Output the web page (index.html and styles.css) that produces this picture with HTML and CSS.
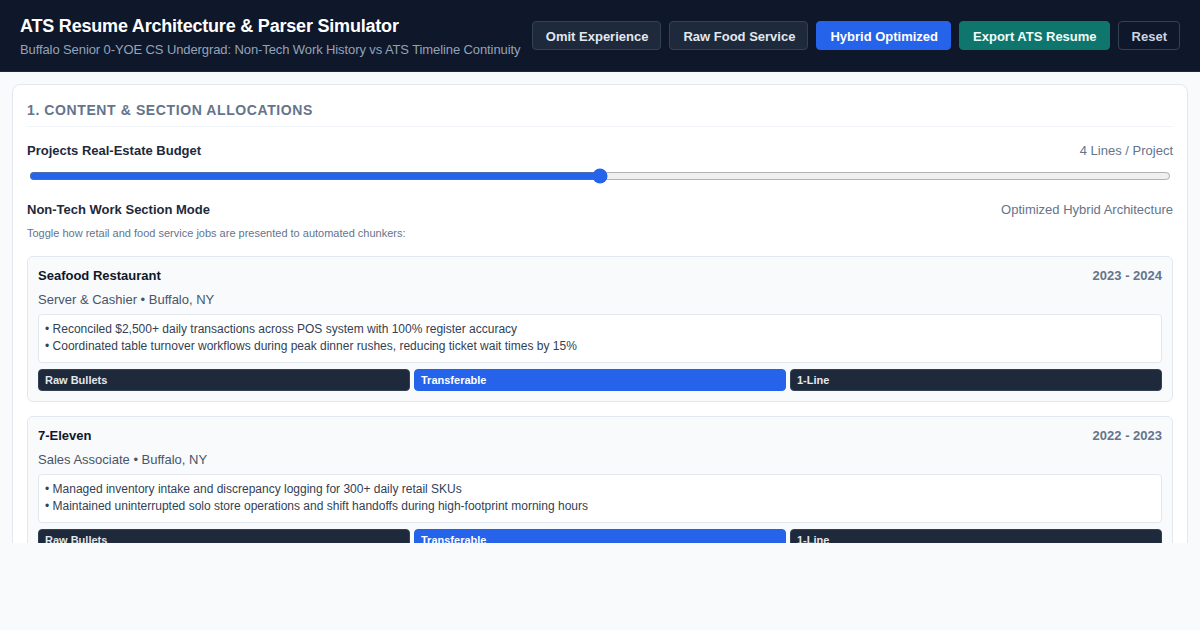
FILE: index.html
```html
<!DOCTYPE html>
<html>
<head>
<meta charset="utf-8">
<link rel="stylesheet" href="styles.css">
</head>
<body>
<header class="topbar">
  <div class="brand">
    <h1 class="title">ATS Resume Architecture &amp; Parser Simulator</h1>
    <div class="subtitle">Buffalo Senior 0-YOE CS Undergrad: Non-Tech Work History vs ATS Timeline Continuity</div>
  </div>
  <div class="actions">
    <button class="btn btn-dark">Omit Experience</button>
    <button class="btn btn-dark">Raw Food Service</button>
    <button class="btn btn-blue">Hybrid Optimized</button>
    <button class="btn btn-teal">Export ATS Resume</button>
    <button class="btn btn-ghost">Reset</button>
  </div>
</header>
<main class="main">
  <section class="card">
    <h2 class="section-title">1. Content &amp; Section Allocations</h2>
    <div class="field-row">
      <span class="field-label">Projects Real-Estate Budget</span>
      <span class="field-value">4 Lines / Project</span>
    </div>
    <input class="range" type="range" min="1" max="7" value="4">
    <div class="field-row mode-row">
      <span class="field-label">Non-Tech Work Section Mode</span>
      <span class="field-value">Optimized Hybrid Architecture</span>
    </div>
    <p class="hint">Toggle how retail and food service jobs are presented to automated chunkers:</p>

    <div class="job">
      <div class="job-head">
        <span class="job-name">Seafood Restaurant</span>
        <span class="job-dates">2023 - 2024</span>
      </div>
      <div class="job-role">Server &amp; Cashier • Buffalo, NY</div>
      <div class="bullets">
        <div>• Reconciled $2,500+ daily transactions across POS system with 100% register accuracy</div>
        <div>• Coordinated table turnover workflows during peak dinner rushes, reducing ticket wait times by 15%</div>
      </div>
      <div class="modes">
        <button class="mode mode-dark">Raw Bullets</button>
        <button class="mode mode-blue">Transferable</button>
        <button class="mode mode-dark">1-Line</button>
      </div>
    </div>

    <div class="job">
      <div class="job-head">
        <span class="job-name">7-Eleven</span>
        <span class="job-dates">2022 - 2023</span>
      </div>
      <div class="job-role">Sales Associate • Buffalo, NY</div>
      <div class="bullets">
        <div>• Managed inventory intake and discrepancy logging for 300+ daily retail SKUs</div>
        <div>• Maintained uninterrupted solo store operations and shift handoffs during high-footprint morning hours</div>
      </div>
      <div class="modes">
        <button class="mode mode-dark">Raw Bullets</button>
        <button class="mode mode-blue">Transferable</button>
        <button class="mode mode-dark">1-Line</button>
      </div>
    </div>
  </section>
</main>
</body>
</html>
```
FILE: styles.css
```css
* { box-sizing: border-box; }
html, body { margin: 0; padding: 0; }
body {
  background: #f8fafc;
  font-family: "Liberation Sans", Arial, sans-serif;
  color: #1e293b;
  width: 1200px;
  height: 630px;
  overflow: hidden;
}
.topbar {
  height: 72px;
  background: #0f172a;
  border-bottom: 1px solid #1e293b;
  display: flex;
  align-items: center;
  justify-content: space-between;
  padding: 2px 20px 0;
}
.title {
  margin: 0;
  font-size: 18px;
  font-weight: 700;
  color: #ffffff;
  letter-spacing: -0.2px;
  line-height: 22px;
}
.subtitle {
  margin-top: 5px;
  font-size: 13px;
  color: #94a3b8;
  letter-spacing: -0.1px;
  line-height: 16px;
}
.actions {
  display: flex;
  gap: 8px;
  margin-top: -2px;
}
.btn {
  height: 29px;
  padding: 1px 12px 0 13px;
  font-family: "Liberation Sans", Arial, sans-serif;
  font-size: 13px;
  font-weight: 700;
  border-radius: 4px;
  border: 1px solid transparent;
  color: #ffffff;
  cursor: pointer;
}
.btn-dark { background: #1e293b; border-color: #334155; color: #e2e8f0; }
.btn-blue { background: #2563eb; border-color: #2563eb; }
.btn-teal { background: #0f766e; border-color: #0f766e; color: #f0fdfa; }
.btn-ghost { background: transparent; border-color: #334155; color: #cbd5e1; }

.main {
  height: 471px;
  overflow: hidden;
  padding: 12px 12px 0;
}
.card {
  background: #ffffff;
  border: 1px solid #e2e8f0;
  border-radius: 8px;
  padding: 16px 14px;
}
.section-title {
  margin: 0 0 16px;
  padding-top: 1px;
  padding-bottom: 7px;
  font-size: 14px;
  font-weight: 700;
  text-transform: uppercase;
  letter-spacing: 0.6px;
  color: #64748b;
  line-height: 17px;
  border-bottom: 1px solid #f1f5f9;
}
.field-row {
  display: flex;
  justify-content: space-between;
  align-items: center;
  font-size: 13px;
  line-height: 16px;
}
.field-label { font-weight: 700; color: #1e293b; }
.field-value { color: #64748b; }
.range {
  display: block;
  width: calc(100% - 4px);
  margin: 9px 2px 18px;
  accent-color: #2563eb;
}
.hint {
  margin: 8px 0 16px;
  font-size: 11px;
  color: #64748b;
  line-height: 14px;
}
.job {
  background: #f8fafc;
  border: 1px solid #e2e8f0;
  border-radius: 6px;
  padding: 11px 10px 10px;
  margin-bottom: 14px;
}
.job-head {
  display: flex;
  justify-content: space-between;
  font-size: 13px;
  font-weight: 700;
  line-height: 16px;
}
.job-name { color: #0f172a; }
.job-dates { color: #64748b; }
.job-role {
  margin-top: 8px;
  font-size: 13px;
  color: #475569;
  line-height: 16px;
}
.bullets {
  margin-top: 6px;
  background: #ffffff;
  border: 1px solid #e2e8f0;
  border-radius: 4px;
  padding: 6px 6px 7px;
  font-size: 12px;
  line-height: 17px;
  color: #334155;
}
.modes {
  margin-top: 6px;
  display: grid;
  grid-template-columns: 1fr 1fr 1fr;
  gap: 4px;
}
.mode {
  height: 22px;
  border: 1px solid transparent;
  border-radius: 4px;
  text-align: left;
  padding: 0 6px;
  font-family: "Liberation Sans", Arial, sans-serif;
  font-size: 11px;
  font-weight: 700;
  color: #ffffff;
}
.mode-dark { background: #1e293b; border-color: #334155; color: #e2e8f0; }
.mode-blue { background: #2563eb; border-color: #2563eb; }
```
